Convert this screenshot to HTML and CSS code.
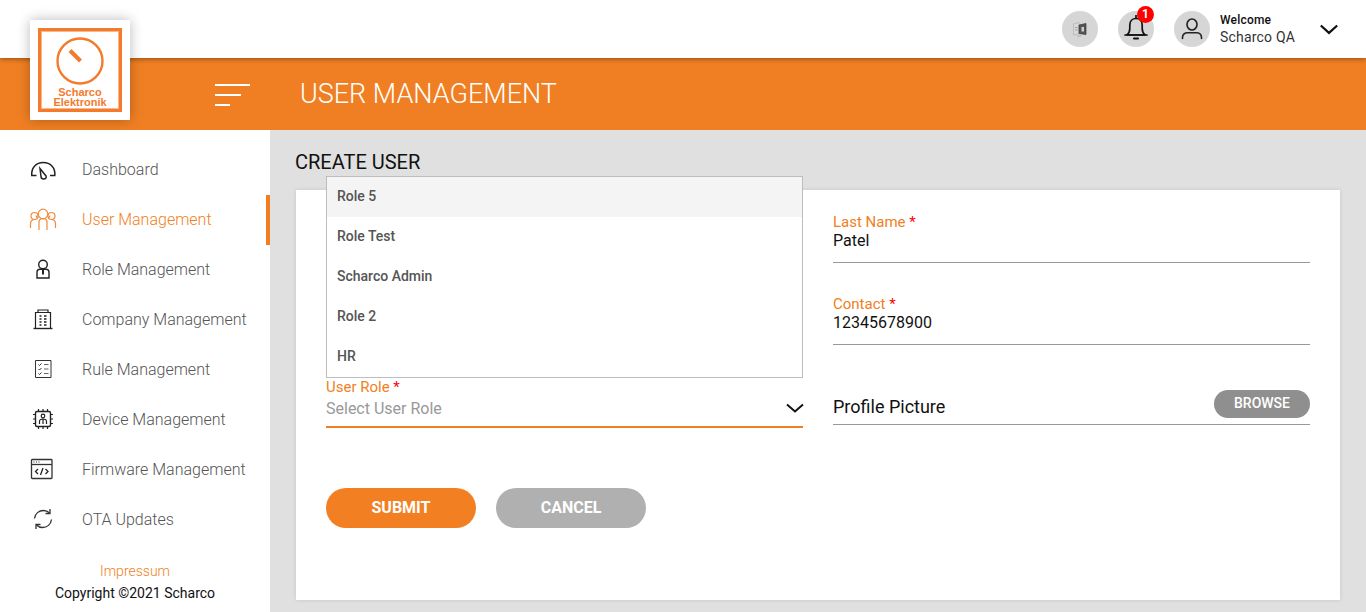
FILE: index.html
```html
<!DOCTYPE html>
<html lang="en">
<head>
<meta charset="utf-8">
<title>User Management</title>
<link rel="stylesheet" href="styles.css">
</head>
<body>
<div class="logo">
  <div class="logo-frame">
    <svg class="logo-dial" width="50" height="50" viewBox="0 0 50 50"><circle cx="25" cy="25" r="22.500" fill="none" stroke="#f47a2c" stroke-width="2.400"/><path d="M15 14.500 25.500 25" stroke="#f47a2c" stroke-width="4" fill="none"/></svg>
    <div class="logo-text">Scharco<br>Elektronik</div>
  </div>
</div>
<header class="topbar">
  <div class="round">
    <svg width="16" height="16" viewBox="0 0 16 16"><path d="M1.500 3 7 1.500v11l-5.500 1.500z" fill="#dadada" stroke="#b0b0b0" stroke-width=".7"/><path d="M7 4 14 2.500v11L7 12.500z" fill="#555" stroke="#3a3a3a" stroke-width=".7"/><path d="M9.500 6h2.500v4.500H9.500z" fill="#ccc"/><path d="M3 6.500h2.500M3 9h2.500" stroke="#999"/><path d="M5 15h4" stroke="#aaa"/></svg>
  </div>
  <div class="round bell">
    <svg width="26" height="28" viewBox="0 0 26 28"><path d="M4 22c2.200-2 2.800-3.500 2.800-6.500v-3.500c0-3.800 2.600-6.500 6.200-6.500s6.200 2.700 6.200 6.500v3.500c0 3 .6 4.500 2.800 6.500z" fill="none" stroke="#111" stroke-width="1.700" stroke-linejoin="round"/><path d="M2 22h22" stroke="#111" stroke-width="1.700" stroke-linecap="round"/><path d="M11 25.500h4" stroke="#111" stroke-width="2" stroke-linecap="round"/><path d="M13 2v3.500" stroke="#111" stroke-width="1.700"/></svg>
    <span class="badge">1</span>
  </div>
  <div class="round">
    <svg width="24" height="24" viewBox="0 0 24 24"><ellipse cx="12" cy="7.500" rx="5" ry="5.500" fill="none" stroke="#222" stroke-width="1.600"/><path d="M2.500 21.500v-1c0-3 2.500-4.800 5-4.800h9c2.500 0 5 1.800 5 4.800v1" fill="none" stroke="#222" stroke-width="1.600" stroke-linecap="round"/></svg>
  </div>
  <div class="welcome"><span class="welcome-top">Welcome</span><span class="welcome-name">Scharco QA</span></div>
  <svg class="user-chevron" width="18" height="11" viewBox="0 0 18 11"><path d="M.8 1.500 9 8.900l8.200-7.400" fill="none" stroke="#111" stroke-width="2.200"/></svg>
</header>
<div class="brandbar">
  <div class="burger"><span class="line-a"></span><span class="line-b"></span><span class="line-c"></span></div>
  <h1 class="page-title">USER MANAGEMENT</h1>
</div>
<div class="body-row">
  <aside class="sidebar">
    <nav class="nav">
      <a class="nav-item">
        <svg class="nav-icon" width="28" height="24" viewBox="0 0 28 24"><path d="M2 18.500h5.500M21 18.500h5.500M2.800 18.500C2 10.500 7.500 5.500 14.300 5.500s12.300 5 11.500 13" fill="none" stroke="#222" stroke-width="1.500"/><path d="M11 11.500 17 19c.8 1.500-.3 3-2.300 3-1.800 0-2.700-1-2.700-2.500z" fill="none" stroke="#222" stroke-width="1.500"/></svg>
        <span>Dashboard</span>
      </a>
      <a class="nav-item active">
        <svg class="nav-icon" width="28" height="24" viewBox="0 0 28 24" fill="none" stroke="#f28a3c" stroke-width="1.200"><circle cx="14" cy="7" r="4.800"/><path d="M9 11.500c-1.500-1-2-1.700-2-3"/><path d="M19 11.500c1.500-1 2-1.700 2-3"/><circle cx="5.500" cy="9" r="3.500"/><circle cx="22.500" cy="9" r="3.500"/><path d="M10 23v-8c0-2 1-3.500 4-3.500s4 1.500 4 3.500v8"/><path d="M1.500 21v-4c0-3 2-4.500 4.500-4.500M26.500 21v-4c0-3-2-4.500-4.500-4.500"/></svg>
        <span>User Management</span>
      </a>
      <a class="nav-item">
        <svg class="nav-icon" width="28" height="24" viewBox="0 0 28 24" fill="none" stroke="#222" stroke-width="1.400"><circle cx="14" cy="7.500" r="4.300"/><path d="M8 21v-6c0-1.800 1-2.800 3-2.800h6c2 0 3 1 3 2.800v6z"/><path d="M14 12.500v5" stroke-width="2"/></svg>
        <span>Role Management</span>
      </a>
      <a class="nav-item">
        <svg class="nav-icon" width="28" height="24" viewBox="0 0 28 24" fill="none" stroke="#222" stroke-width="1.200"><path d="M4.500 21.500h19" stroke-width="1.400"/><path d="M6.500 21.500V5.500h15v16"/><path d="M9 5.500V3h10v2.500"/><path d="M10.500 9h2M15 9h2.500M10.500 12h2M15 12h2.500M10.500 15h2M15 15h2.500M10.500 18h2M15 18h2.500" stroke-width="1.500"/></svg>
        <span>Company Management</span>
      </a>
      <a class="nav-item">
        <svg class="nav-icon" width="28" height="24" viewBox="0 0 28 24" fill="none" stroke="#333" stroke-width="1"><path d="M6.500 3.500h15.500v17H6.500z"/><path d="M9.500 7.500l1 1 2-2M9.500 12l1 1 2-2M9.500 16.500l1 1 2-2"/><path d="M15 7.500h4.500M15 12h4.500M15 16.500h4.500" stroke="#666"/></svg>
        <span>Rule Management</span>
      </a>
      <a class="nav-item">
        <svg class="nav-icon" width="28" height="24" viewBox="0 0 28 24" fill="none" stroke="#222" stroke-width="1.200"><rect x="6.500" y="4.500" width="15" height="15" rx="1.500" stroke-width="1.400"/><path d="M9.500 2v2.500M14 2v2.500M18.500 2v2.500M9.500 19.500V22M14 19.500V22M18.500 19.500V22M4 7.500h2.500M4 12h2.500M4 16.500h2.500M21.500 7.500H24M21.500 12H24M21.500 16.500H24"/><circle cx="14" cy="9" r="1.800"/><path d="M10.500 17v-2.500c0-1.500 1.500-2.500 3.500-2.500s3.500 1 3.500 2.500V17M14 12.500V17"/></svg>
        <span>Device Management</span>
      </a>
      <a class="nav-item">
        <svg class="nav-icon" width="28" height="24" viewBox="0 0 28 24" fill="none" stroke="#333" stroke-width="1.300"><rect x="2.500" y="2.500" width="20.500" height="19" rx=".8"/><path d="M2.500 7.500h20.500"/><path d="M4.500 5h1M7 5h1M9.500 5h1" stroke-width="1.200"/><path d="M9 12l-2.500 2.500L9 17M16.500 12l2.500 2.500-2.500 2.500M14 11l-2.500 7" stroke="#222"/></svg>
        <span>Firmware Management</span>
      </a>
      <a class="nav-item">
        <svg class="nav-icon" width="28" height="24" viewBox="0 0 28 24" fill="none" stroke="#333" stroke-width="1.300"><path d="M5.500 11.500C6 6.500 10 3.500 14.500 3.500c2.500 0 4.500 1 6 2.500"/><path d="M21 2v4.500h-4.500"/><path d="M22.500 12.500c-.5 5-4.500 8-9 8-2.500 0-4.500-1-6-2.500"/><path d="M7 22v-4.500h4.500"/></svg>
        <span>OTA Updates</span>
      </a>
    </nav>
    <footer class="side-footer">
      <a class="impressum">Impressum</a>
      <p class="copyright">Copyright ©2021 Scharco</p>
    </footer>
  </aside>
  <main class="main">
    <h2 class="section-title">CREATE USER</h2>
    <section class="card">
      <div class="form-grid">
        <div class="field right">
          <label class="field-label">Last Name <b class="req">*</b></label>
          <div class="field-value">Patel</div>
        </div>
        <div class="field right">
          <label class="field-label">Contact <b class="req">*</b></label>
          <div class="field-value">12345678900</div>
        </div>
        <div class="field select-field">
          <ul class="dropdown">
            <li class="option hover">Role 5</li>
            <li class="option">Role Test</li>
            <li class="option">Scharco Admin</li>
            <li class="option">Role 2</li>
            <li class="option">HR</li>
          </ul>
          <label class="field-label">User Role <b class="req">*</b></label>
          <div class="select-row">
            <span class="placeholder">Select User Role</span>
            <svg class="select-chevron" width="18" height="10" viewBox="0 0 18 10"><path d="M1 1.500 9 8.500l8-7" fill="none" stroke="#111" stroke-width="2"/></svg>
          </div>
        </div>
        <div class="file-field">
          <span class="file-label">Profile Picture</span>
          <button class="browse" type="button">BROWSE</button>
        </div>
      </div>
      <div class="actions">
        <button class="btn submit" type="button">SUBMIT</button>
        <button class="btn cancel" type="button">CANCEL</button>
      </div>
    </section>
  </main>
</div>
</body>
</html>
```
FILE: styles.css
```css
* { box-sizing: border-box; }
html, body { height: 100%; }
body {
  margin: 0;
  height: 612px;
  overflow: hidden;
  display: flex;
  flex-direction: column;
  font-family: Roboto, "Liberation Sans", sans-serif;
  color: #111;
  background: #fff;
  position: relative;
}

/* logo overlaps the two header bars */
.logo {
  position: absolute;
  left: 30px;
  top: 20px;
  width: 100px;
  height: 100px;
  padding: 8px;
  background: #fff;
  box-shadow: 0 0 12px rgba(0, 0, 0, .28);
  z-index: 5;
}
.logo-frame {
  width: 84px;
  height: 84px;
  border: 3px solid #f47a2c;
  outline: 1px solid #f9b78d;
  outline-offset: -4px;
  display: flex;
  flex-direction: column;
  align-items: center;
  padding-top: 5px;
}
.logo-dial { flex: none; width: 50px; height: 50px; }
.logo-text {
  font-family: "Liberation Sans", Arial, sans-serif;
  font-weight: 700;
  font-size: 11px;
  line-height: 10px;
  text-align: center;
  color: #f47a2c;
  margin-top: 1px;
}

/* top white bar */
.topbar {
  height: 58px;
  flex: none;
  display: flex;
  align-items: center;
  justify-content: flex-end;
  padding-right: 28px;
  background: #fff;
  box-shadow: 0 1px 5px rgba(0, 0, 0, .4);
  position: relative;
  z-index: 2;
}
.round {
  width: 36px;
  height: 36px;
  border-radius: 50%;
  background: #d6d6d6;
  display: flex;
  align-items: center;
  justify-content: center;
  margin-right: 20px;
  position: relative;
}
.round:nth-child(3) { margin-right: 10px; }
.bell svg { position: relative; top: -2px; }
.badge {
  position: absolute;
  top: -5px;
  left: 19px;
  width: 17px;
  height: 17px;
  border-radius: 50%;
  background: #f00;
  color: #fff;
  font-size: 12px;
  font-weight: 700;
  line-height: 17px;
  text-align: center;
}
.welcome {
  width: 100px;
  display: flex;
  flex-direction: column;
  line-height: 17px;
  letter-spacing: .2px;
}
.welcome-top { font-size: 12px; font-weight: 500; }
.welcome-name { font-size: 14px; font-weight: 400; color: #333; }
.user-chevron { flex: none; }

/* orange bar */
.brandbar {
  height: 72px;
  flex: none;
  background: #f07f23;
  display: flex;
  align-items: center;
  padding-left: 215px;
}
.burger {
  width: 35px;
  display: flex;
  flex-direction: column;
  gap: 8px;
  margin-right: 50px;
  margin-top: 2px;
}
.burger span { display: block; height: 2px; background: #fff; }
.line-a { width: 35px; }
.line-b { width: 26px; }
.line-c { width: 15px; }
.page-title {
  margin: 0;
  font-size: 27px;
  font-weight: 300;
  color: #fff;
}

/* body */
.body-row { flex: 1; display: flex; min-height: 0; }
.sidebar {
  width: 270px;
  flex: none;
  background: #fff;
  display: flex;
  flex-direction: column;
  padding-top: 15px;
}
.nav { display: flex; flex-direction: column; }
.nav-item {
  height: 50px;
  display: flex;
  align-items: center;
  padding-left: 29px;
  padding-bottom: 2px;
  font-size: 16px;
  font-weight: 300;
  color: #555;
  position: relative;
}
.nav-item span { margin-left: 25px; }
.nav-icon { flex: none; }
.nav-item.active { color: #f07f23; }
.nav-item.active::after {
  content: "";
  position: absolute;
  right: 0;
  top: 0;
  width: 4px;
  height: 50px;
  background: #f07f23;
}
.side-footer {
  margin-top: auto;
  padding-bottom: 8px;
  text-align: center;
  font-size: 14px;
}
.impressum { display: block; color: #f07f23; font-weight: 300; line-height: 22px; }
.copyright { margin: 0; line-height: 22px; color: #111; }

.main {
  flex: 1;
  min-width: 0;
  background: #e0e0e0;
  padding: 22px 26px 12px;
  display: flex;
  flex-direction: column;
}
.section-title {
  margin: 0 0 18px -1px;
  font-size: 20px;
  font-weight: 400;
  line-height: 20px;
  color: #111;
}
.card {
  flex: 1;
  background: #fff;
  padding: 24px 30px 0;
  box-shadow: 0 0 4px rgba(0, 0, 0, .12);
}
.form-grid {
  display: grid;
  grid-template-columns: 477px 477px;
  column-gap: 30px;
  row-gap: 33px;
  grid-auto-rows: 49px;
  align-items: start;
}
.field { position: relative; }
.field.right {
  grid-column: 2;
  height: 49px;
  border-bottom: 1px solid #999;
}
.field-label {
  display: block;
  font-size: 15px;
  font-weight: 400;
  line-height: 16px;
  color: #f07f23;
}
.req { color: #f00; font-weight: 400; }
.field-value { font-size: 16px; line-height: 20px; padding-top: 1px; color: #111; }

.select-field {
  grid-column: 1;
  height: 50px;
  padding-top: 1px;
  border-bottom: 2px solid #f07f23;
}
.select-row {
  display: flex;
  align-items: center;
  justify-content: space-between;
  height: 26px;
}
.select-chevron { margin-right: -1px; }
.placeholder { font-size: 16px; font-weight: 400; color: #999; }
.dropdown {
  position: absolute;
  left: 0;
  right: 0;
  bottom: 100%;
  margin: 0;
  padding: 0;
  list-style: none;
  background: #fff;
  border: 1px solid #bdbdbd;
}
.option {
  height: 40px;
  padding-left: 10px;
  padding-bottom: 2px;
  display: flex;
  align-items: center;
  font-size: 14px;
  font-weight: 500;
  color: #555;
}
.option.hover { background: #f4f4f4; }

.file-field {
  grid-column: 2;
  height: 47px;
  display: flex;
  align-items: flex-start;
  justify-content: space-between;
  border-bottom: 1px solid #999;
  padding-top: 12px;
}
.file-label { font-size: 18px; line-height: 34px; color: #111; }
.browse {
  width: 96px;
  height: 28px;
  border: 0;
  border-radius: 14px;
  background: #8f8f8f;
  color: #fff;
  font: 500 14px/26px Roboto, sans-serif;
  padding: 0 0 2px;
}
.actions { display: flex; gap: 20px; margin-top: 61px; }
.btn {
  width: 150px;
  height: 40px;
  border: 0;
  border-radius: 20px;
  color: #fff;
  font: 700 16px Roboto, sans-serif;
  padding: 0 0 2px;
}
.submit { background: #f28022; }
.cancel { background: #b0b0b0; }
```
